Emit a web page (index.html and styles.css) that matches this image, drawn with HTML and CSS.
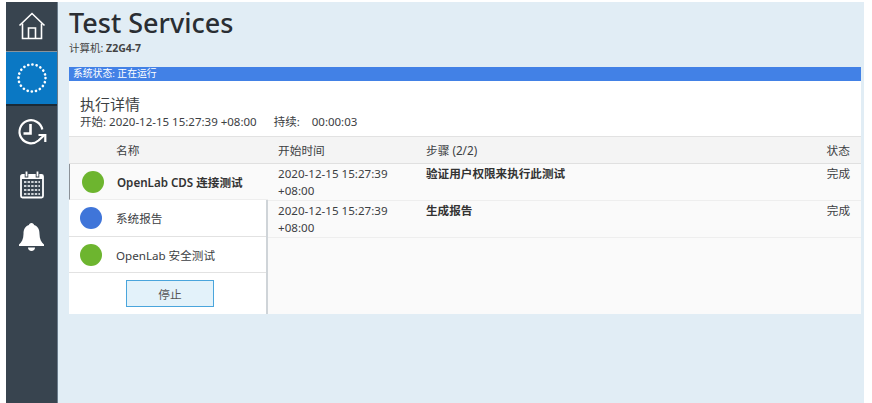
FILE: index.html
```html
<!DOCTYPE html>
<html lang="zh">
<head>
<meta charset="utf-8">
<title>Test Services</title>
<link rel="stylesheet" href="styles.css">
</head>
<body>
<div class="app">
  <nav class="sidebar">
    <div class="nav-item nav-home">
      <svg viewBox="0 0 30 30" width="30" height="30" fill="none" stroke="#fff" stroke-width="1.6"><path d="M2.5 14.5 15 2.500l12.500 12"/><path d="M5.500 12.500V27.500h19V12.500"/><path d="M11.500 27.500V17h7v10.500"/></svg>
    </div>
    <div class="nav-item nav-active">
      <svg viewBox="0 0 32 32" width="32" height="32"><circle cx="16" cy="16" r="13.500" fill="none" stroke="#fff" stroke-width="2.600" stroke-linecap="round" stroke-dasharray="0.1 4.141"/></svg>
    </div>
    <div class="nav-item nav-plain nav-history">
      <svg viewBox="0 0 30 30" width="30" height="30" fill="none" stroke="#fff" stroke-width="2.200"><path d="M25.300 12.500A11.500 11.500 0 1 0 21.500 23.500L27.500 18"/><path d="M13.500 7V16.500H6.500" stroke-width="2.600"/><path d="M21.500 18H28.300V25" stroke-width="2.200"/></svg>
    </div>
    <div class="nav-item nav-plain nav-calendar">
      <svg viewBox="0 0 26 29" width="26" height="29"><rect x="2" y="5" width="22" height="22.500" rx="1.500" fill="none" stroke="#fff" stroke-width="1.800"/><path d="M2 5h22v4H2z" fill="#fff"/><path d="M7.500 1.500v6M18.500 1.500v6" stroke="#38444f" stroke-width="3.600"/><path d="M7.500 1.500v5M18.500 1.500v5" stroke="#fff" stroke-width="1.800"/><path d="M5 12h16M5 16h16M5 20h16M5 24h16" stroke="#cfd4d8" stroke-width="2.200" stroke-dasharray="2.400 1.200"/></svg>
    </div>
    <div class="nav-item nav-plain nav-bell">
      <svg viewBox="0 0 26 30" width="27" height="30" fill="#fff"><path d="M13 1c1.500 0 2.500 1 2.500 2 4 1.200 5.500 4.500 5.500 9 0 5 2 8.500 4.500 10.500v1.500H.5v-1.500C3 20.500 5 17 5 12c0-4.500 1.500-7.800 5.500-9C10.500 2 11.500 1 13 1z"/><path d="M9.500 25.500h7c0 2-1.500 3.500-3.500 3.500s-3.500-1.500-3.500-3.500z"/></svg>
    </div>
  </nav>
  <main class="main">
    <header class="page-head">
      <h1 class="page-title">Test Services</h1>
      <p class="machine">计算机: <b>Z2G4-7</b></p>
    </header>
    <div class="status-bar">系统状态: 正在运行</div>
    <section class="details">
      <h2 class="details-title">执行详情</h2>
      <p class="details-meta"><span class="meta-start">开始: 2020-12-15 15:27:39 +08:00</span><span>持续:&nbsp;&nbsp;&nbsp; 00:00:03</span></p>
    </section>
    <section class="grid">
      <div class="col-tests">
        <div class="head head-name">名称</div>
        <div class="test test-current"><span class="dot dot-green"></span><span>OpenLab CDS 连接测试</span></div>
        <div class="rest">
          <div class="test test-b"><span class="dot dot-blue"></span><span>系统报告</span></div>
          <div class="test test-c"><span class="dot dot-green"></span><span>OpenLab 安全测试</span></div>
          <div class="actions"><button class="stop" type="button">停止</button></div>
        </div>
      </div>
      <div class="col-steps">
        <div class="head row">
          <span class="c-time">开始时间</span><span class="c-step">步骤 (2/2)</span><span class="c-state">状态</span>
        </div>
        <div class="row step">
          <span class="c-time">2020-12-15 15:27:39 +08:00</span><b class="c-step">验证用户权限来执行此测试</b><span class="c-state">完成</span>
        </div>
        <div class="row step">
          <span class="c-time">2020-12-15 15:27:39 +08:00</span><b class="c-step">生成报告</b><span class="c-state">完成</span>
        </div>
      </div>
    </section>
  </main>
</div>
</body>
</html>
```

FILE: styles.css
```css
* { box-sizing: border-box; }
html, body { height: 100%; }
body {
  margin: 0;
  padding: 2px 8px 0 6px;
  background: #fff;
  color: #3c4043;
  font-family: "Noto Sans", "Noto Sans CJK SC", sans-serif;
  font-size: 11px;
  overflow: hidden;
}
.app { display: flex; height: 401px; background: #e1edf5; }
.sidebar {
  flex: none;
  width: 52px;
  background: #38444f;
  border-right: 1px solid #6b7d8c;
}
.nav-item { display: flex; justify-content: center; align-items: center; }
.nav-home { height: 50px; border-bottom: 1px solid #8a939b; padding-bottom: 1px; }
.nav-active { height: 54px; background: #0a78c4; border-bottom: 2px solid #1b2a36; margin-bottom: 1px; }
.nav-history { height: 50px; }
.nav-calendar { height: 50px; margin-top: 2px; }
.nav-bell { height: 50px; margin-top: 3px; }
.main { flex: 1; min-width: 0; padding: 0 3px 0 11px; }
.page-head { height: 65px; padding-top: 4px; }
.page-title { margin: 0; font-size: 27px; line-height: 33px; font-weight: 500; color: #2a2e33; }
.machine { margin: 2px 0 0; font-size: 10.500px; line-height: 14px; color: #444; }
.machine b { font-weight: 700; }
.status-bar { height: 14px; background: #4281e6; color: #fff; font-size: 9.800px; line-height: 14px; padding-left: 4px; }
.details { height: 56px; background: #fff; padding: 14px 11px 0; border-bottom: 1px solid #e2e2e2; }
.details-title { margin: 0; font-size: 15px; line-height: 19px; font-weight: 400; color: #3c3f42; }
.details-meta { margin: 0; font-size: 11.500px; line-height: 16px; }
.meta-start { margin-right: 17px; }
.grid { display: flex; height: 177px; background: #fafafa; }
.col-tests { flex: none; width: 199px; display: flex; flex-direction: column; }
.col-steps { flex: 1; min-width: 0; }
.head { height: 27px; background: #f4f4f4; border-bottom: 1px solid #e0e0e0; line-height: 26px; font-size: 11.700px; }
.head-name { padding-left: 47px; }
.test { display: flex; align-items: center; border-bottom: 1px solid #e2e2e2; font-size: 11.600px; }
.test-current {
  height: 36px;
  background: #fafafa;
  border-left: 1px solid #8c9197;
  font-weight: 600;
  color: #333;
  border-bottom-color: #eee;
  padding-left: 12px;
}
.test-current .dot { margin-right: 13px; }
.test-b { height: 37px; }
.test-c { height: 36px; }
.rest { flex: 1; background: #fff; border-right: 2px solid #cfd4d8; }
.rest .test { padding-left: 11px; }
.rest .dot { margin-right: 14px; }
.dot { flex: none; width: 22px; height: 22px; border-radius: 50%; }
.dot-green { background: #6db52f; }
.dot-blue { background: #3f75d9; }
.actions { padding-top: 7px; padding-left: 57px; }
.stop {
  display: block;
  width: 88px;
  height: 27px;
  padding: 0;
  background: #e3f2fa;
  border: 1px solid #4aa5dc;
  color: #555;
  font: inherit;
  font-size: 11.700px;
}
.row { display: flex; padding-left: 10px; padding-right: 11px; }
.step { height: 37px; border-bottom: 1px solid #eeeeee; line-height: 17px; font-size: 11.600px; padding-top: 1px; }
.c-time { flex: none; width: 148px; padding-right: 24px; }
.c-step { flex: 1; }
.c-state { flex: none; }
.step b { font-weight: 600; color: #333; }
```
